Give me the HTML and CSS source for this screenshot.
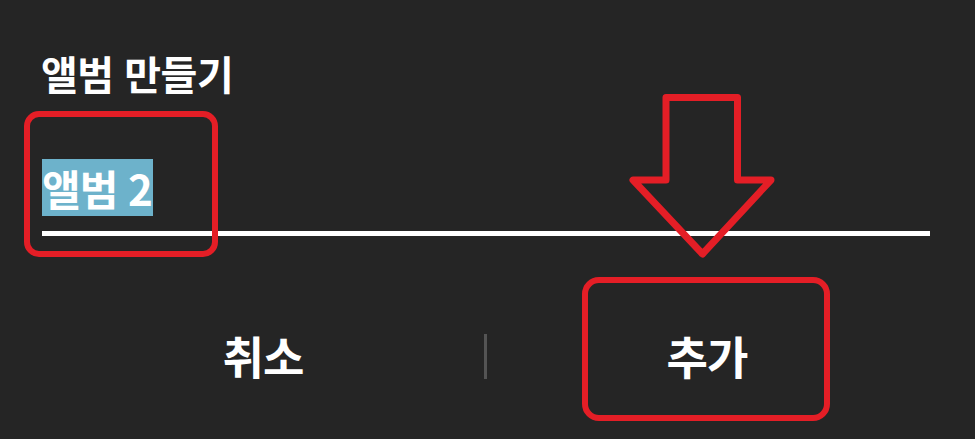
FILE: index.html
```html
<!DOCTYPE html>
<html lang="ko">
<head>
<meta charset="utf-8">
<link rel="stylesheet" href="styles.css">
</head>
<body>
<div class="dialog">
  <h1 class="title">앨범 만들기</h1>
  <div class="field">
    <span class="value">앨범 2</span>
  </div>
  <div class="actions">
    <div class="btn btn-cancel">취소</div>
    <div class="divider"></div>
    <div class="btn btn-add">추가</div>
  </div>
  <div class="mark mark-field"></div>
  <div class="mark mark-add"></div>
  <svg class="arrow" width="975" height="439" viewBox="0 0 975 439">
    <polygon points="666,97.5 737.5,97.5 737.5,180 771,180 702.5,254 633,180 666,180" fill="none" stroke="#e41e26" stroke-width="7" stroke-linejoin="round"/>
  </svg>
</div>
</body>
</html>
```
FILE: styles.css
```css
html, body {
  margin: 0;
  padding: 0;
  background: #252525;
}
.dialog {
  position: relative;
  width: 975px;
  height: 439px;
  overflow: hidden;
  font-family: "Noto Sans CJK KR", "Noto Sans", sans-serif;
  color: #ffffff;
  font-weight: 700;
}
.title {
  margin: 0;
  padding: 51px 0 0 41px;
  font-size: 40px;
  line-height: 44px;
  font-weight: 700;
  letter-spacing: -0.5px;
}
.field {
  margin: 64px 45px 0 42px;
  height: 77px;
  border-bottom: 5px solid #ffffff;
  box-sizing: border-box;
  display: flex;
  align-items: flex-start;
}
.value {
  background: #6db2cb;
  font-size: 42px;
  line-height: 57px;
  height: 57px;
  padding: 0 1px 0 0;
  letter-spacing: -1px;
}
.actions {
  display: flex;
  align-items: center;
  height: 240px;
}
.btn {
  box-sizing: border-box;
  text-align: center;
  font-size: 45px;
  line-height: 50px;
  letter-spacing: -1px;
}
.btn-cancel {
  width: 484px;
  padding-left: 42px;
}
.btn-add {
  width: 488px;
  padding-right: 48px;
}
.divider {
  width: 3px;
  height: 45px;
  background: #545454;
}
.mark {
  position: absolute;
  border: 6px solid #e41e26;
  border-radius: 15px;
  box-sizing: border-box;
}
.mark-field {
  left: 24px;
  top: 111px;
  width: 194px;
  height: 146px;
}
.mark-add {
  left: 582px;
  top: 277px;
  width: 248px;
  height: 144px;
  border-radius: 17px;
}
.arrow {
  position: absolute;
  left: 0;
  top: 0;
}
```
